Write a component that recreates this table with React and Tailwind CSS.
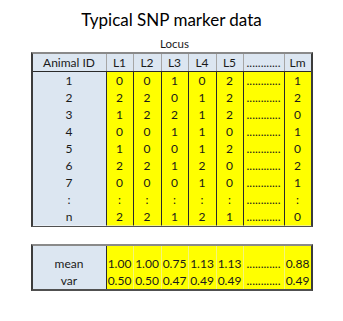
import React from "react";

const colsClass =
  "grid grid-cols-[74px_27px_28px_27px_28px_27px_41px_26px]";

const rows = [
  ["1", "0", "0", "1", "0", "2", "1"],
  ["2", "2", "2", "0", "1", "2", "2"],
  ["3", "1", "2", "2", "1", "2", "0"],
  ["4", "0", "0", "1", "1", "0", "1"],
  ["5", "1", "0", "0", "1", "2", "0"],
  ["6", "2", "2", "1", "2", "0", "2"],
  ["7", "0", "0", "0", "1", "0", "1"],
  [":", ":", ":", ":", ":", ":", ":"],
  ["n", "2", "2", "1", "2", "1", "0"],
];

const stats = [
  ["mean", "1.00", "1.00", "0.75", "1.13", "1.13", "0.88"],
  ["var", "0.50", "0.50", "0.47", "0.49", "0.49", "0.49"],
];

const DOTS = "............";

const App = () => {
  return (
    <div className="w-[343px] h-[321px] bg-white text-[#1a1a1a] font-['Lato',sans-serif]">
      <h1 className="pt-[10px] h-[30px] text-[17px] leading-[20px] text-center text-black">
        Typical SNP marker data
      </h1>
      <div className="mt-[7px] h-[14px] text-[11.5px] leading-[14px] text-center pl-[6px]">
        Locus
      </div>

      {/* main table */}
      <div className="mt-[1px] mx-auto w-[282px] border-t-2 border-t-[#8a8a8a] border-x-2 border-x-[#3c3c3c] border-b-2 border-b-[#505050] text-[12px]">
        <div className={`${colsClass} h-[18px] bg-[#dce6f1] border-b border-b-[#2a2a2a] leading-[17px] text-center`}>
          {["Animal ID", "L1", "L2", "L3", "L4", "L5", DOTS, "Lm"].map((h, i) => (
            <div key={i} className={i < 7 ? "border-r border-r-[#a6a6a6] overflow-hidden" : ""}>
              {h}
            </div>
          ))}
        </div>
        {rows.map((r, ri) => {
          const cells = [...r.slice(0, 6), DOTS, r[6]];
          return (
            <div
              key={ri}
              className={`${colsClass} h-[17px] leading-[17px] text-center`}
            >
              {cells.map((c, i) => (
                <div
                  key={i}
                  className={
                    i === 0
                      ? "bg-[#dce6f1] border-r border-r-[#2a2a2a] border-b border-b-[#eaf0f7]"
                      : i < 7
                      ? "bg-[#ffff00] border-r border-r-[#2a2a2a] border-b border-b-[#f4f47a] overflow-hidden"
                      : "bg-[#ffff00] border-b border-b-[#f4f47a]"
                  }
                >
                  {c}
                </div>
              ))}
            </div>
          );
        })}
      </div>

      {/* summary table */}
      <div className="mt-[17px] mx-auto w-[282px] border-t-2 border-t-[#8a8a8a] border-x-2 border-x-[#3c3c3c] border-b-2 border-b-[#505050] text-[12px]">
        {[["", "", "", "", "", "", ""], ...stats].map((r, ri) => {
          const cells = [...r.slice(0, 6), ri === 0 ? "" : DOTS, r[6]];
          return (
            <div
              key={ri}
              className={`${colsClass} ${ri === 0 ? "h-[9px]" : "h-[17px]"} leading-[17px] text-center`}
            >
              {cells.map((c, i) => (
                <div
                  key={i}
                  className={
                    i === 0
                      ? "bg-[#dce6f1] border-r border-r-[#2a2a2a] text-center"
                      : i < 7
                      ? "bg-[#ffff00] border-r border-r-[#f4f47a] overflow-hidden"
                      : "bg-[#ffff00]"
                  }
                >
                  {c}
                </div>
              ))}
            </div>
          );
        })}
      </div>
    </div>
  );
};

export default App;
